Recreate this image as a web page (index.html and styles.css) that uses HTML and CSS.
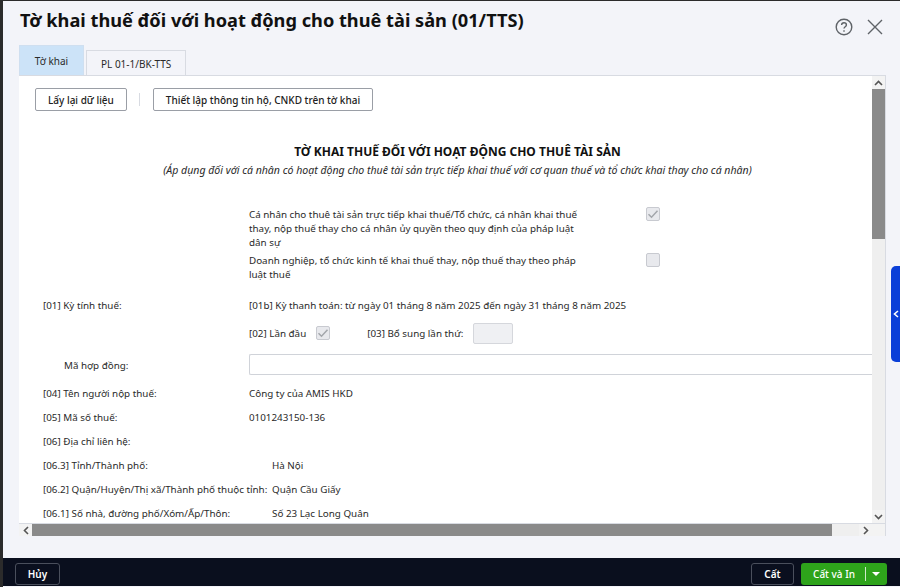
FILE: index.html
```html
<!DOCTYPE html>
<html lang="vi">
<head>
    <meta charset="UTF-8">
    <title>Tờ khai thuế đối với hoạt động cho thuê tài sản (01/TTS)</title>
    <link rel="stylesheet" href="styles.css">
</head>
<body>
    <div class="dialog">
        <div class="dialog-head">
            <h1>Tờ khai thuế đối với hoạt động cho thuê tài sản (01/TTS)</h1>
            <div class="head-icons">
                <svg width="18" height="18" viewBox="0 0 18 18" fill="none" stroke="#5f6368" stroke-width="1.4">
                    <circle cx="9" cy="9" r="7.8"/>
                    <path d="M6.6 7.1c0-1.4 1.1-2.3 2.4-2.3s2.4.9 2.4 2.1c0 1.8-2.4 1.8-2.4 3.6"/>
                    <path d="M9 12.2v1.5"/>
                </svg>
                <svg width="16" height="16" viewBox="0 0 16 16" fill="none" stroke="#5f6368" stroke-width="1.4">
                    <path d="M1 1l14 14M15 1L1 15"/>
                </svg>
            </div>
        </div>
        <div class="tabs">
            <div class="tab tab-active">Tờ khai</div>
            <div class="tab">PL 01-1/BK-TTS</div>
        </div>
        <div class="panel">
            <div class="panel-main">
                <div class="content">
                    <div class="toolbar">
                        <button class="btn">Lấy lại dữ liệu</button>
                        <span class="toolbar-sep"></span>
                        <button class="btn">Thiết lập thông tin hộ, CNKD trên tờ khai</button>
                    </div>
                    <h2>TỜ KHAI THUẾ ĐỐI VỚI HOẠT ĐỘNG CHO THUÊ TÀI SẢN</h2>
                    <p class="subtitle">(Áp dụng đối với cá nhân có hoạt động cho thuê tài sản trực tiếp khai thuế với cơ quan thuế và tổ chức khai thay cho cá nhân)</p>

                    <div class="option option-first">
                        <div class="option-text">Cá nhân cho thuê tài sản trực tiếp khai thuế/Tổ chức, cá nhân khai thuế thay, nộp thuế thay cho cá nhân ủy quyền theo quy định của pháp luật dân sự</div>
                        <span class="check">
                            <svg width="12" height="12" viewBox="0 0 12 12" fill="none" stroke="#a3a6ab" stroke-width="1.5"><path d="M1.5 6.2l3 3 6-6.4"/></svg>
                        </span>
                    </div>
                    <div class="option">
                        <div class="option-text">Doanh nghiệp, tổ chức kinh tế khai thuế thay, nộp thuế thay theo pháp luật thuế</div>
                        <span class="check"></span>
                    </div>

                    <div class="row row-period">
                        <div class="label">[01] Kỳ tính thuế:</div>
                        <div>[01b] Kỳ thanh toán: từ ngày 01 tháng 8 năm 2025 đến ngày 31 tháng 8 năm 2025</div>
                    </div>
                    <div class="row row-times">
                        <div class="label"></div>
                        <div class="times">
                            <span>[02] Lần đầu</span>
                            <span class="check">
                                <svg width="12" height="12" viewBox="0 0 12 12" fill="none" stroke="#a3a6ab" stroke-width="1.5"><path d="M1.5 6.2l3 3 6-6.4"/></svg>
                            </span>
                            <span class="times-extra">[03] Bổ sung lần thứ:</span>
                            <span class="times-input"></span>
                        </div>
                    </div>
                    <div class="row row-contract">
                        <div class="label label-indent">Mã hợp đồng:</div>
                        <div class="text-input"></div>
                    </div>
                    <div class="row">
                        <div class="label">[04] Tên người nộp thuế:</div>
                        <div>Công ty của AMIS HKD</div>
                    </div>
                    <div class="row">
                        <div class="label">[05] Mã số thuế:</div>
                        <div>0101243150-136</div>
                    </div>
                    <div class="row">
                        <div class="label">[06] Địa chỉ liên hệ:</div>
                        <div></div>
                    </div>
                    <div class="row row-address">
                        <div class="label">[06.3] Tỉnh/Thành phố:</div>
                        <div>Hà Nội</div>
                    </div>
                    <div class="row row-address">
                        <div class="label">[06.2] Quận/Huyện/Thị xã/Thành phố thuộc tỉnh:</div>
                        <div>Quận Cầu Giấy</div>
                    </div>
                    <div class="row row-address">
                        <div class="label">[06.1] Số nhà, đường phố/Xóm/Ấp/Thôn:</div>
                        <div>Số 23 Lạc Long Quân</div>
                    </div>
                </div>
                <div class="vscroll">
                    <div class="arrow">
                        <svg width="9" height="6" viewBox="0 0 9 6" fill="none" stroke="#555" stroke-width="1.6"><path d="M1 5l3.5-3.5L8 5"/></svg>
                    </div>
                    <div class="vthumb"></div>
                    <div class="arrow arrow-end">
                        <svg width="9" height="6" viewBox="0 0 9 6" fill="none" stroke="#555" stroke-width="1.6"><path d="M1 1l3.5 3.5L8 1"/></svg>
                    </div>
                </div>
            </div>
            <div class="hscroll">
                <div class="arrow">
                    <svg width="6" height="9" viewBox="0 0 6 9" fill="none" stroke="#555" stroke-width="1.6"><path d="M5 1L1.5 4.5 5 8"/></svg>
                </div>
                <div class="hthumb"></div>
                <div class="arrow">
                    <svg width="6" height="9" viewBox="0 0 6 9" fill="none" stroke="#555" stroke-width="1.6"><path d="M1 1l3.5 3.5L1 8"/></svg>
                </div>
                <div class="corner"></div>
            </div>
        </div>
        <div class="side-handle">
            <svg width="6" height="8" viewBox="0 0 6 8" fill="none" stroke="#fff" stroke-width="1.6"><path d="M5 1L1.5 4 5 7"/></svg>
        </div>
        <div class="footer">
            <button class="btn-dark">Hủy</button>
            <div class="footer-right">
                <button class="btn-dark btn-save">Cất</button>
                <button class="btn-green">
                    <span class="btn-green-text">Cất và In</span>
                    <span class="btn-green-arrow"></span>
                </button>
            </div>
        </div>
    </div>
</body>
</html>
```

FILE: styles.css
```css
* { box-sizing: border-box; }
html, body { height: 100%; }
body {
    margin: 0;
    overflow: hidden;
    font-family: "Noto Sans", sans-serif;
    font-size: 9.83px;
    color: #212121;
    background-color: #2b2b2b;
}
.dialog {
    position: relative;
    height: 587px;
    margin-top: 1px;
    margin-left: 3px;
    display: flex;
    flex-direction: column;
    background-color: #f3f4f9;
}
.dialog-head {
    height: 44px;
    padding: 6px 17px 0 17px;
    display: flex;
    justify-content: space-between;
    align-items: flex-start;
}
h1 {
    margin: 0;
    font-size: 18.2px;
    line-height: 26px;
    font-weight: 700;
    color: #111;
}
.head-icons { display: flex; gap: 14px; align-items: center; margin-top: 11px; }
.tabs { display: flex; gap: 2px; padding-left: 16px; align-items: flex-end; height: 30px; }
.tab {
    height: 25px;
    padding: 0 14px;
    font-size: 10px;
    line-height: 27px;
    border: 1px solid #d8dbe2;
    border-bottom: 0;
    background-color: #f3f4f9;
    color: #2a2a2a;
}
.tab-active {
    height: 30px;
    width: 65px;
    padding: 0;
    text-align: center;
    line-height: 30px;
    background-color: #cce3f8;
    border-color: #cfdff0;
}
.panel {
    width: 867px;
    margin-left: 16px;
    height: 461px;
    display: flex;
    flex-direction: column;
    border-top: 1px solid #d8dbe2;
    border-right: 1px solid #d8dbe2;
}
.panel-main { flex: 1; display: flex; min-height: 0; }
.content {
    flex: 1;
    min-width: 0;
    overflow: hidden;
    padding: 12px 0 0 24px;
    background-color: #fff;
}
.toolbar { display: flex; align-items: center; height: 23px; margin-left: -8px; }
.btn {
    height: 23px;
    padding: 0 12px;
    font: 500 10px "Noto Sans", sans-serif;
    color: #212121;
    background-color: #fff;
    border: 1px solid #9a9ea6;
    border-radius: 2px;
}
.toolbar-sep { width: 1px; height: 13px; margin: 0 13px 0 12px; background-color: #d8dbe2; }
h2 {
    margin: 32px 0 0 0;
    text-align: center;
    font-size: 12px;
    line-height: 18px;
    font-weight: 700;
    color: #111;
}
.subtitle {
    margin: 1px 0 0 0;
    text-align: center;
    font-style: italic;
    font-size: 10.55px;
    line-height: 16px;
    color: #2a2a2a;
}
.option { display: flex; align-items: flex-start; margin-left: 206px; margin-top: 4px; }
.option-first { margin-top: 29px; }
.option-text { width: 332px; line-height: 14px; color: #2a2a2a; }
.check {
    width: 14px;
    height: 14px;
    display: inline-flex;
    align-items: center;
    justify-content: center;
    background-color: #e8e9ed;
    border: 1px solid #c8cad0;
    border-radius: 2px;
}
.option .check { margin-left: 65px; }
.row { display: flex; height: 24px; align-items: center; color: #2a2a2a; }
.label { width: 206px; flex: none; }
.label-indent { padding-left: 21px; }
.row-period { margin-top: 12px; }
.row-times { height: 32px; }
.times { display: flex; align-items: center; }
.times .check { margin-left: 10px; }
.times-extra { margin-left: 37px; }
.times-input {
    width: 40px;
    height: 21px;
    margin-left: 10px;
    background-color: #eff0f3;
    border: 1px solid #d5d7dc;
    border-radius: 2px;
}
.row-contract { height: 32px; }
.text-input {
    flex: 1;
    height: 21px;
    margin-top: -1px;
    background-color: #fff;
    border: 1px solid #d0d3d9;
    border-right: 0;
    border-radius: 2px 0 0 2px;
}
.row-address .label { width: 229px; }
.vscroll { width: 13px; flex: none; display: flex; flex-direction: column; background-color: #efefef; }
.arrow { width: 13px; height: 13px; flex: none; display: flex; align-items: center; justify-content: center; background-color: #f3f3f3; }
.arrow-end { margin-top: auto; }
.vthumb { height: 150px; background-color: #8a8a8a; }
.hscroll { height: 13px; flex: none; display: flex; background-color: #efefef; border-top: 1px solid #d8dbe2; }
.hthumb { width: 800px; background-color: #8a8a8a; }
.hscroll .arrow { height: 12px; }
.hthumb + .arrow { margin-left: auto; }
.corner { width: 13px; flex: none; background-color: #f3f3f3; }
.side-handle {
    position: absolute;
    right: 0;
    top: 265px;
    width: 9px;
    height: 96px;
    display: flex;
    align-items: center;
    justify-content: center;
    background-color: #0a3fd8;
    border-radius: 5px 0 0 5px;
}
.footer {
    position: absolute;
    left: 0;
    right: 0;
    top: 557px;
    height: 28px;
    padding: 5px 13px 0 12px;
    display: flex;
    justify-content: space-between;
    align-items: flex-start;
    background-color: #0a0f1e;
}
.footer-right { display: flex; gap: 7px; }
.btn-dark {
    width: 45px;
    height: 22px;
    font: 600 10px "Noto Sans", sans-serif;
    color: #fff;
    background-color: #0a0f1e;
    border: 1px solid #4a4f5c;
    border-radius: 3px;
}
.btn-save { width: 43px; }
.btn-green {
    width: 86px;
    height: 22px;
    padding: 0;
    display: flex;
    align-items: center;
    font: 500 10px "Noto Sans", sans-serif;
    color: #fff;
    background-color: #2ea31b;
    border: 0;
    border-radius: 3px;
}
.btn-green-text {
    width: 65px;
    padding-left: 2px;
    text-align: center;
    line-height: 14px;
    border-right: 1px solid #cfe9ca;
}
.btn-green-arrow {
    margin-left: 6px;
    width: 0;
    height: 0;
    border-left: 4px solid transparent;
    border-right: 4px solid transparent;
    border-top: 4px solid #fff;
}
```
